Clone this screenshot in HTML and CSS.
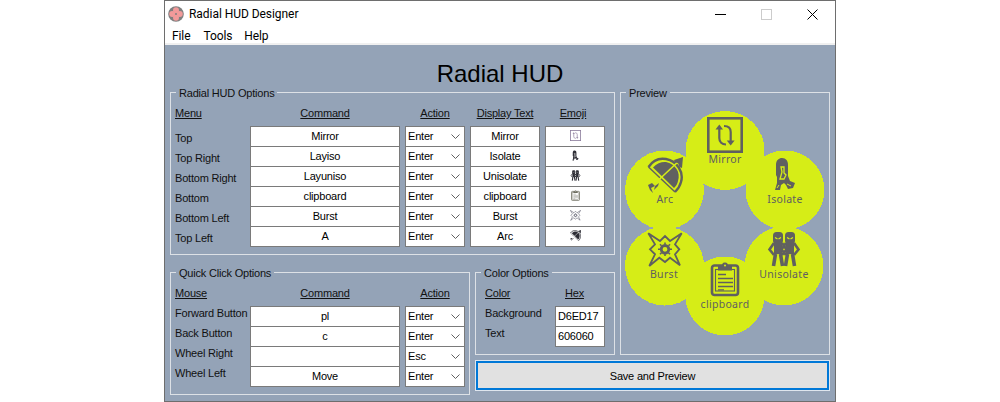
FILE: index.html
```html
<!DOCTYPE html>
<html lang="en">
<head>
<meta charset="utf-8">
<title>Radial HUD Designer</title>
<link rel="stylesheet" href="styles.css">
</head>
<body>
<svg class="defs" width="0" height="0" aria-hidden="true">
  <symbol id="i-mirror" viewBox="0 0 36 36">
    <rect x="1.3" y="1.3" width="33.4" height="33.4" fill="none" stroke="currentColor" stroke-width="2.6"/>
    <path d="M12.3 11V21C12.3 25 15 27.5 19 27.5" fill="none" stroke="currentColor" stroke-width="2.2"/>
    <path d="M12.3 7.5L8.5 12.5H16Z" fill="currentColor"/>
    <path d="M23.7 25V15C23.7 11 21 9 17 9" fill="none" stroke="currentColor" stroke-width="2.2"/>
    <path d="M23.7 28.5L19.8 23.5H27.6Z" fill="currentColor"/>
  </symbol>
  <symbol id="i-arc" viewBox="0 0 36 36">
    <path d="M1.5 10C6 3 13 1 19 2C30 4 37 15 34 25C33 29 31 32 28 35" fill="none" stroke="currentColor" stroke-width="2.4"/>
    <path d="M1.5 10L28 35" fill="none" stroke="currentColor" stroke-width="1.4"/>
    <path d="M6 10.5C10 6 15 4.500 19 5C28 7 34 15 31 24C30.500 27 29 29 27 31Z" fill="currentColor"/>
    <path d="M3 31L33 3" fill="none" stroke="var(--hud-bg, #d6ed17)" stroke-width="1.6"/>
    <path d="M36 0L27 3L28 5.500L31 6L32.500 10L35 11Z" fill="currentColor"/>
    <path d="M1 28L5 26L8 29L4 31L6 36L3 33Z M8 29L12 26L11 29L7 33Z" fill="currentColor"/>
  </symbol>
  <symbol id="i-isolate" viewBox="0 0 36 36">
    <path fill="currentColor" d="M9 9C9 4 12 2 15 2C19 2 21 5 21 9V20L23 25L28 27L26 32L21 33L19 29L17 27L14 29L13 34H8L10 27L10 21L9 19Z"/>
    <path fill="none" stroke="var(--hud-bg, #d6ed17)" stroke-width="1.300" d="M14 11H17V17L19 19L17 23H13L15 16Z"/>
    <path fill="none" stroke="var(--hud-bg, #d6ed17)" stroke-width="1" d="M20 28L24 30M10 32L12 29"/>
  </symbol>
  <symbol id="i-burst" viewBox="0 0 36 36">
    <path fill="none" stroke="currentColor" stroke-width="1.800" stroke-linejoin="miter" d="M1.300 1.300L13 9L18 4L23 9L34.700 1.300L28 12.300L32.300 17.300L28 22.300L33 33.300L23 25.700L18 30L12.300 25.700L2.300 34L8 22.300L3 17.300L8 12.300Z"/>
    <circle cx="18" cy="17.300" r="3.800" fill="none" stroke="currentColor" stroke-width="2.800"/>
    <path fill="none" stroke="currentColor" stroke-width="1.600" d="M18 10.500V12.500M18 22V24M11 17.300H13M23 17.300H25M13 12.300L14.500 13.800M23 12.300L21.500 13.800M13 22.300L14.500 20.800M23 22.300L21.500 20.800"/>
  </symbol>
  <symbol id="i-clip" viewBox="0 0 36 36">
    <rect x="5" y="4.500" width="26" height="29.500" rx="2.500" fill="none" stroke="currentColor" stroke-width="2.600"/>
    <rect x="8.500" y="8.500" width="19" height="21.500" fill="none" stroke="currentColor" stroke-width="1.100"/>
    <path fill="currentColor" d="M11 5H15C15 2 16.500 1.500 18 1.500C19.500 1.500 21 2 21 5H25V9.500H11Z"/>
    <circle cx="18" cy="4.500" r="1" fill="var(--hud-bg, #d6ed17)"/>
    <path fill="none" stroke="currentColor" stroke-width="1.300" d="M11 13.500H19M11 17.500H26M11 21.500H26M11 25.500H26M11 28.800H17"/>
  </symbol>
  <symbol id="i-uni" viewBox="0 0 36 36">
    <g>
      <rect x="7" y="1" width="10" height="12" rx="3.500" fill="currentColor"/>
      <rect x="8" y="11" width="8" height="12" fill="currentColor"/>
      <path d="M8 12L3.500 18.500L8 24M16 12L20.500 18.500L16 24" fill="none" stroke="currentColor" stroke-width="2.600"/>
      <path d="M9.500 23L7.500 35M14.500 23L16.500 35" fill="none" stroke="currentColor" stroke-width="3.600"/>
      <path d="M9 6.500L11.500 8M15 6.500L12.500 8" fill="none" stroke="var(--hud-bg, #d6ed17)" stroke-width="1.200"/>
    </g>
    <g transform="translate(12 0)">
      <rect x="7" y="1" width="10" height="12" rx="3.500" fill="currentColor"/>
      <rect x="8" y="11" width="8" height="12" fill="currentColor"/>
      <path d="M8 12L3.500 18.500L8 24M16 12L20.500 18.500L16 24" fill="none" stroke="currentColor" stroke-width="2.600"/>
      <path d="M9.500 23L7.500 35M14.500 23L16.500 35" fill="none" stroke="currentColor" stroke-width="3.600"/>
      <path d="M9 6.500L11.500 8M15 6.500L12.500 8" fill="none" stroke="var(--hud-bg, #d6ed17)" stroke-width="1.200"/>
    </g>
  </symbol>
</svg>

<div class="window">
  <header class="titlebar">
    <svg class="app-icon" viewBox="0 0 16 16" aria-hidden="true">
      <circle cx="8" cy="8" r="7.800" fill="#7f7f7f"/>
      <circle cx="8" cy="4.200" r="3" fill="#f29a9a"/>
      <circle cx="4.200" cy="8" r="3" fill="#f29a9a"/>
      <circle cx="11.800" cy="8" r="3" fill="#f29a9a"/>
      <circle cx="8" cy="11.800" r="3" fill="#f29a9a"/>
    </svg>
    <span class="app-title">Radial HUD Designer</span>
    <div class="controls">
      <span class="ctl"><svg width="11" height="11" viewBox="0 0 11 11"><path d="M0 5.500H11" stroke="#000"/></svg></span>
      <span class="ctl"><svg width="11" height="11" viewBox="0 0 11 11"><rect x=".5" y=".5" width="10" height="10" fill="none" stroke="#ccc"/></svg></span>
      <span class="ctl"><svg width="11" height="11" viewBox="0 0 11 11"><path d="M.5 .5L10.500 10.500M10.500 .5L.5 10.500" stroke="#000"/></svg></span>
    </div>
  </header>
  <nav class="menubar"><span>File</span><span>Tools</span><span>Help</span></nav>

  <main class="client">
    <h1 class="heading">Radial HUD</h1>
    <div class="layout">
      <section class="group group-radial">
        <span class="legend">Radial HUD Options</span>
        <div class="table table-radial">
          <span class="th">Menu</span><span class="th c">Command</span><span class="th c">Action</span><span class="th c">Display Text</span><span class="th c th-emoji">Emoji</span>

          <span class="lbl low">Top</span><span class="box">Mirror</span><span class="box sel">Enter<svg class="chev" viewBox="0 0 9 5"><path d="M.5 .5L4.500 4.500L8.500 .5"/></svg></span><span class="box">Mirror</span><span class="box"><svg class="emoji e-mirror"><use href="#i-mirror"/></svg></span>

          <span class="lbl low">Top Right</span><span class="box">Layiso</span><span class="box sel">Enter<svg class="chev" viewBox="0 0 9 5"><path d="M.5 .5L4.500 4.500L8.500 .5"/></svg></span><span class="box">Isolate</span><span class="box"><svg class="emoji"><use href="#i-isolate"/></svg></span>

          <span class="lbl low">Bottom Right</span><span class="box">Layuniso</span><span class="box sel">Enter<svg class="chev" viewBox="0 0 9 5"><path d="M.5 .5L4.500 4.500L8.500 .5"/></svg></span><span class="box">Unisolate</span><span class="box"><svg class="emoji"><use href="#i-uni"/></svg></span>

          <span class="lbl low">Bottom</span><span class="box">clipboard</span><span class="box sel">Enter<svg class="chev" viewBox="0 0 9 5"><path d="M.5 .5L4.500 4.500L8.500 .5"/></svg></span><span class="box">clipboard</span><span class="box"><svg class="emoji e-clip"><use href="#i-clip"/></svg></span>

          <span class="lbl low">Bottom Left</span><span class="box">Burst</span><span class="box sel">Enter<svg class="chev" viewBox="0 0 9 5"><path d="M.5 .5L4.500 4.500L8.500 .5"/></svg></span><span class="box">Burst</span><span class="box"><svg class="emoji e-burst"><use href="#i-burst"/></svg></span>

          <span class="lbl low">Top Left</span><span class="box">A</span><span class="box sel">Enter<svg class="chev" viewBox="0 0 9 5"><path d="M.5 .5L4.500 4.500L8.500 .5"/></svg></span><span class="box">Arc</span><span class="box"><svg class="emoji"><use href="#i-arc"/></svg></span>
        </div>
      </section>

      <section class="group group-preview">
        <span class="legend">Preview</span>
        <svg class="hud" width="208" height="261" viewBox="0 0 208 261">
          <g class="discs">
            <circle cx="104" cy="57.500" r="39.500"/>
            <circle cx="164" cy="97" r="39.500"/>
            <circle cx="163" cy="173" r="39.500"/>
            <circle cx="104" cy="203" r="39.500"/>
            <circle cx="43.500" cy="173" r="39.500"/>
            <circle cx="43.500" cy="97" r="39.500"/>
          </g>
          <use href="#i-mirror" x="86" y="24" width="36" height="36"/>
          <use href="#i-isolate" x="146" y="63" width="36" height="36"/>
          <use href="#i-uni" x="145" y="138" width="36" height="36"/>
          <use href="#i-clip" x="86" y="168" width="36" height="36"/>
          <use href="#i-burst" x="26" y="139" width="36" height="36"/>
          <use href="#i-arc" x="26" y="64" width="36" height="36"/>
          <text x="104" y="70">Mirror</text>
          <text x="164" y="110">Isolate</text>
          <text x="163" y="185">Unisolate</text>
          <text x="104" y="215">clipboard</text>
          <text x="43" y="185">Burst</text>
          <text x="44" y="110">Arc</text>
        </svg>
      </section>

      <section class="group group-quick">
        <span class="legend">Quick Click Options</span>
        <div class="table table-quick">
          <span class="th">Mouse</span><span class="th c">Command</span><span class="th c">Action</span>
          <span class="lbl">Forward Button</span><span class="box">pl</span><span class="box sel">Enter<svg class="chev" viewBox="0 0 9 5"><path d="M.5 .5L4.500 4.500L8.500 .5"/></svg></span>
          <span class="lbl">Back Button</span><span class="box">c</span><span class="box sel">Enter<svg class="chev" viewBox="0 0 9 5"><path d="M.5 .5L4.500 4.500L8.500 .5"/></svg></span>
          <span class="lbl">Wheel Right</span><span class="box"></span><span class="box sel">Esc<svg class="chev" viewBox="0 0 9 5"><path d="M.5 .5L4.500 4.500L8.500 .5"/></svg></span>
          <span class="lbl">Wheel Left</span><span class="box">Move</span><span class="box sel">Enter<svg class="chev" viewBox="0 0 9 5"><path d="M.5 .5L4.500 4.500L8.500 .5"/></svg></span>
        </div>
      </section>

      <section class="group group-color">
        <span class="legend">Color Options</span>
        <div class="table table-color">
          <span class="th">Color</span><span class="th hex">Hex</span>
          <span class="lbl">Background</span><span class="box left">D6ED17</span>
          <span class="lbl">Text</span><span class="box left">606060</span>
        </div>
      </section>

      <button class="save" type="button">Save and Preview</button>
    </div>
  </main>
</div>
</body>
</html>
```

FILE: styles.css
```css
* { box-sizing: border-box; }

html, body {
  margin: 0;
  height: 100%;
  background: #fff;
}

body {
  display: flex;
  justify-content: center;
  overflow: hidden;
  font-family: "Liberation Sans", Arial, sans-serif;
  font-size: 11px;
  letter-spacing: -.2px;
  color: #111;
}

.defs { display: block; height: 0; }

.window {
  width: 672px;
  height: 402px;
  border: 1px solid #6e6e6e;
  display: flex;
  flex-direction: column;
  background: #fff;
}

.titlebar {
  flex: none;
  height: 28px;
  display: flex;
  align-items: center;
  padding-left: 3px;
  font-family: Roboto, "Open Sans", sans-serif;
  font-size: 12px;
  letter-spacing: -.05px;
  color: #000;
}

.app-icon { width: 16px; height: 16px; margin-top: -2px; }
.app-title { margin-left: 5px; margin-top: -2px; }

.controls { margin-left: auto; display: flex; margin-top: -2px; }
.ctl { width: 46px; display: flex; justify-content: center; }

.menubar {
  flex: none;
  height: 16px;
  display: flex;
  gap: 12px;
  padding-left: 7px;
  font-family: Roboto, "Open Sans", sans-serif;
  font-size: 12px;
  letter-spacing: -.1px;
  line-height: 14px;
  color: #000;
  border-bottom: 2px solid #f0f0f0;
}
.menubar span:first-child { margin-right: 1px; }

.client {
  flex: 1;
  background: #94a3b7;
  padding: 0 5px;
  min-height: 0;
}

.heading {
  margin: 14px 0 0;
  height: 33px;
  text-align: center;
  font-weight: 400;
  font-size: 24px;
  letter-spacing: 0;
  line-height: 30px;
  color: #000;
}

.layout {
  display: grid;
  grid-template-columns: 300px 140px 210px;
  grid-template-rows: 163px 17px 83px 6px 35px;
  column-gap: 5px;
}

.group {
  position: relative;
  border: 1px solid #dde1e6;
  padding: 13px 4px 0;
}

.legend {
  position: absolute;
  top: -6px;
  left: 5px;
  padding: 0 3px;
  background: #94a3b7;
  line-height: 13px;
  white-space: nowrap;
}

.group-radial { grid-column: 1 / 3; grid-row: 1; }
.group-preview { grid-column: 3; grid-row: 1 / 4; padding: 0; }
.group-quick { grid-column: 1; grid-row: 3 / 6; height: 123px; }
.group-color { grid-column: 2; grid-row: 3; padding-left: 9px; }

.table {
  display: grid;
  grid-auto-rows: 20px;
  column-gap: 5px;
  align-items: start;
}

.table-radial { grid-template-columns: 70px 150px 60px 70px 60px; }
.table-quick { grid-template-columns: 70px 150px 60px; }
.table-color { grid-template-columns: 70px 50px; column-gap: 0; }

.th {
  text-decoration: underline;
  line-height: 14px;
  white-space: nowrap;
}
.th.c { text-align: center; }
.th.hex { padding-left: 10px; }
.th.th-emoji { padding-right: 4px; }

.lbl {
  line-height: 14px;
  white-space: nowrap;
}
.lbl.low { padding-top: 5px; }

.box {
  height: 21px;
  padding-bottom: 2px;
  background: #fff;
  border: 1px solid #7a7a7a;
  display: flex;
  align-items: center;
  justify-content: center;
  color: #000;
  white-space: nowrap;
}
.box.sel { justify-content: space-between; padding: 0 4px 2px 2px; }
.box.sel .chev { margin-top: 2px; }
.box.left { justify-content: flex-start; padding-left: 2px; }

.chev {
  width: 9px;
  height: 5px;
  fill: none;
  stroke: #606060;
}

.emoji {
  width: 11px;
  height: 11px;
  color: #2c2c34;
  --hud-bg: #fff;
}
.e-mirror { color: #8a7a9a; }
.e-clip { color: #6e6e60; }
.e-burst { color: #556; }

.hud { display: block; color: #606060; --hud-bg: #d6ed17; }
.hud .discs { fill: #d6ed17; shape-rendering: crispEdges; }
.hud text {
  font-family: "Noto Sans", "Open Sans", sans-serif;
  font-size: 10.5px;
  letter-spacing: .3px;
  text-anchor: middle;
  fill: #606060;
}

.save {
  grid-column: 2 / 4;
  grid-row: 5;
  margin: 0 1px;
  height: 29px;
  padding: 0;
  background: #e1e1e1;
  border: 2px solid #0078d7;
  outline: 1px solid #dfe6ee;
  font: inherit;
  letter-spacing: inherit;
  color: #000;
}
```
